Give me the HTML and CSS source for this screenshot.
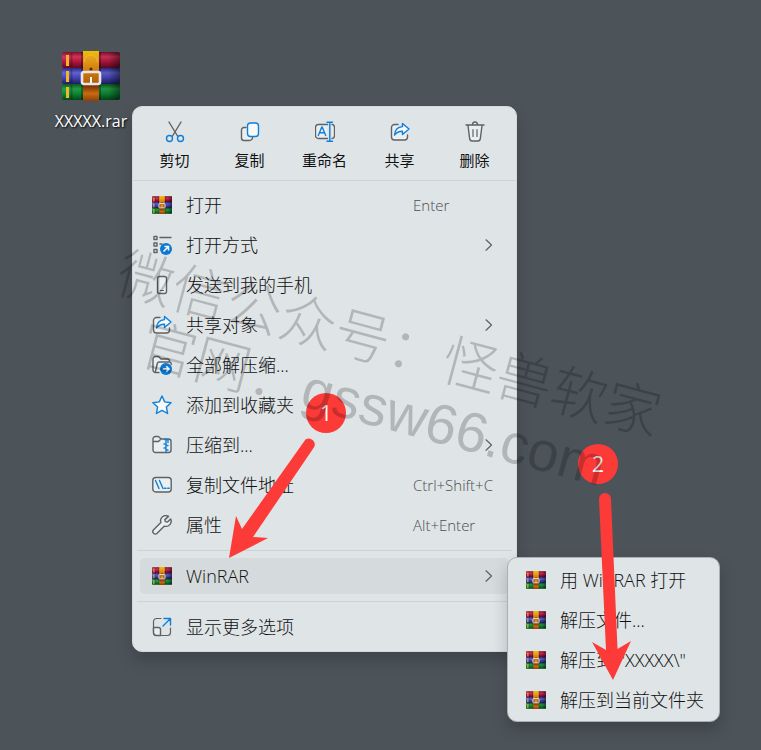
FILE: index.html
```html
<!DOCTYPE html>
<html lang="zh-CN">
<head>
  <meta charset="UTF-8">
  <meta name="viewport" content="width=device-width, initial-scale=1">
  <title>解压到当前文件夹</title>
  <link rel="stylesheet" href="styles.css">
</head>
<body>
<svg class="defs" width="0" height="0" aria-hidden="true">
  <defs>
    <linearGradient id="g-red" x2="0" y2="1"><stop offset="0" stop-color="#7d1230"/><stop offset=".3" stop-color="#d8345c"/><stop offset=".6" stop-color="#b5173f"/><stop offset="1" stop-color="#5e0a24"/></linearGradient>
    <linearGradient id="g-blue" x2="0" y2="1"><stop offset="0" stop-color="#2b2b85"/><stop offset=".3" stop-color="#6464d4"/><stop offset=".6" stop-color="#4646b8"/><stop offset="1" stop-color="#1f1f62"/></linearGradient>
    <linearGradient id="g-green" x2="0" y2="1"><stop offset="0" stop-color="#0a5a22"/><stop offset=".3" stop-color="#22a046"/><stop offset=".6" stop-color="#0d8a35"/><stop offset="1" stop-color="#04491a"/></linearGradient>
    <linearGradient id="g-side"><stop offset="0" stop-color="#000" stop-opacity="0"/><stop offset=".8" stop-color="#000" stop-opacity=".1"/><stop offset="1" stop-color="#000" stop-opacity=".5"/></linearGradient>
    <linearGradient id="g-belt" x2="0" y2="1"><stop offset="0" stop-color="#f0c000"/><stop offset=".15" stop-color="#e3a018"/><stop offset=".4" stop-color="#d07a10"/><stop offset=".62" stop-color="#b86008"/><stop offset=".7" stop-color="#7a3204"/><stop offset=".85" stop-color="#c96a10"/><stop offset="1" stop-color="#8c4006"/></linearGradient>
    <symbol id="rar" viewBox="0 0 58 50" preserveAspectRatio="none">
      <rect x="0" y="1" width="58" height="16" rx="2" fill="url(#g-red)"/>
      <rect x="0" y="17" width="58" height="16" rx="2" fill="url(#g-blue)"/>
      <rect x="0" y="33" width="58" height="16" rx="2" fill="url(#g-green)"/>
      <rect x="0" y="1" width="58" height="48" rx="2" fill="url(#g-side)"/>
      <path d="M5.500 4v11M5.500 20v11M5.500 36v11" stroke="#f3b52a" stroke-width="3"/>
      <path d="M9.500 2v14M9.500 18v14M9.500 34v14" stroke="#000" stroke-opacity=".25" stroke-width="2"/>
      <path d="M19 1h2v48h-2zM37 1h2v48h-2z" fill="#000" fill-opacity=".3"/>
      <rect x="21" y="0" width="16" height="50" fill="url(#g-belt)"/>
      <path d="M22.500 11q0-7 6.500-7t6.500 7" fill="none" stroke="#f0b840"/>
      <circle cx="29" cy="18" r="1.600" fill="#5d2a04"/>
      <rect x="20" y="21" width="18" height="12" rx="2" fill="none" stroke="#e4e6ea" stroke-width="2.600"/>
      <path d="M29 26v6" stroke="#fff" stroke-width="2"/>
    </symbol>
    <symbol id="share" viewBox="0 0 20 20">
      <path class="ln" d="M8 2.500H4.500a3 3 0 0 0-3 3v9.500a3 3 0 0 0 3 3h10a3 3 0 0 0 3-3v-2"/>
      <path class="bl" d="M12.500 1.500l6.500 5.500-6.500 5.500v-3.300c-3.500-.2-5.800 1-8 3.800.3-4.500 3-8 8-8.400z"/>
    </symbol>
    <symbol id="chevron" viewBox="0 0 8 12"><path class="thin" d="M1 .8L6.500 6 1 11.200"/></symbol>
  </defs>
</svg>

<main class="desktop">
  <div class="file">
    <svg class="file-icon"><use href="#rar"/></svg>
    <span>XXXXX.rar</span>
  </div>

  <div class="menu">
    <div class="toolbar">
      <button>
        <svg viewBox="0 0 20 22"><path class="ln" d="M4 1l8.500 14M16 1L7.500 15"/><circle class="ring" cx="4.500" cy="17.500" r="3"/><circle class="ring" cx="15.500" cy="17.500" r="3"/></svg>
        <span>剪切</span>
      </button>
      <button>
        <svg viewBox="0 0 20 22"><path class="ln" d="M6 6.500H4a2.500 2.500 0 0 0-2.500 2.500v8A2.500 2.500 0 0 0 4 19.500h5.500a3 3 0 0 0 3-3"/><rect class="bl" x="7.500" y="2" width="11" height="13.500" rx="3"/></svg>
        <span>复制</span>
      </button>
      <button>
        <svg viewBox="0 0 20 22"><path class="ln" d="M12.500 3.500h-9a3 3 0 0 0-3 3v8a3 3 0 0 0 3 3h9M17 3.500c1.700 0 2.500 1.500 2.500 3v8c0 1.500-.8 3-2.500 3"/><path class="ring" d="M3.300 14.500L6.800 6h.4l3.500 8.500M4.500 11.800h5M12 1.300h5.500M12 20.200h5.500M14.800 1.300v19"/></svg>
        <span>重命名</span>
      </button>
      <button>
        <svg viewBox="0 -1 20 22"><use href="#share" width="20" height="20"/></svg>
        <span>共享</span>
      </button>
      <button>
        <svg viewBox="0 0 20 22"><path class="ln" d="M3 4.500l1.700 13.500a2.500 2.500 0 0 0 2.400 2h5.800a2.500 2.500 0 0 0 2.400-2L17 4.500M1 4h18M7.500 4c0-4 5-4 5 0"/><path class="thin" d="M8 8.500v7M12 8.500v7"/></svg>
        <span>删除</span>
      </button>
    </div>

    <ul class="list">
      <li><button class="item"><svg class="rar"><use href="#rar"/></svg><span>打开</span><kbd>Enter</kbd></button></li>
      <li><button class="item">
        <svg viewBox="0 0 20 20"><path class="ln" d="M2 1.500h3v3H2zM2 8h3v3H2zM2 14.500h3v3H2zM8 2.500h11M8 9h2"/><circle class="dot" cx="14" cy="14" r="6"/><path class="wh" d="M11.500 16.500l5-5M12.500 11.500h4v4"/></svg>
        <span>打开方式</span><svg class="chevron"><use href="#chevron"/></svg></button></li>
      <li><button class="item">
        <svg viewBox="0 0 20 20"><rect class="ln" x="5.500" y="1.500" width="9" height="17" rx="2"/><path class="thin" d="M8.500 15.500h3"/></svg>
        <span>发送到我的手机</span></button></li>
      <li><button class="item">
        <svg viewBox="0 0 20 20"><use href="#share"/></svg>
        <span>共享对象</span><svg class="chevron"><use href="#chevron"/></svg></button></li>
      <li><button class="item">
        <svg viewBox="0 0 20 20"><path class="ln" d="M7 17.500H3.500a2.500 2.500 0 0 1-2.500-2.500V4a2.500 2.500 0 0 1 2.500-2.500H6.500l2.500 2.500h6.500a2 2 0 0 1 2 2M3.300 17l2-8.500a2 2 0 0 1 2-1.500h10.200a2 2 0 0 1 1.700 2.500"/><circle class="dot" cx="14" cy="14" r="6"/><path class="wh" d="M10.800 14h6M14.300 11.300L17 14l-2.700 2.700"/></svg>
        <span>全部解压缩...</span></button></li>
      <li><button class="item">
        <svg viewBox="0 0 20 20"><path class="bl" d="M10 1l2.700 5.900 6.400.8-4.700 4.400 1.200 6.400L10 15.400l-5.600 3.100 1.200-6.400L.9 7.700l6.400-.8z"/></svg>
        <span>添加到收藏夹</span></button></li>
      <li><button class="item">
        <svg viewBox="0 0 20 20"><path class="ln" d="M1 6.500V4a2.500 2.500 0 0 1 2.500-2.500h3L9 4h7.500A2.500 2.500 0 0 1 19 6.500v8.500a2.500 2.500 0 0 1-2.500 2.500h-13A2.500 2.500 0 0 1 1 15zh5.500L9 4"/><path class="ring" d="M12.500 4.500h3.500v3M14 4.500v13M14 10.500h2M12 9h2M12 13h2M14 15h2"/></svg>
        <span>压缩到...</span><svg class="chevron"><use href="#chevron"/></svg></button></li>
      <li><button class="item">
        <svg viewBox="0 0 20 20"><rect class="ln" x=".8" y="2.500" width="18.400" height="14.500" rx="3"/><path class="ring" d="M3.500 5.500l3.500 8M7.500 5.500l3.500 8M12.500 13.200h1.500M15.700 13.200h1.500"/></svg>
        <span>复制文件地址</span><kbd>Ctrl+Shift+C</kbd></button></li>
      <li><button class="item">
        <svg viewBox="0 0 20 20"><path class="ln" d="M16.500 1.400a5.200 5.200 0 0 0-7.600 6.100L1.600 14.800a2.400 2.400 0 0 0 3.500 3.500l7.300-7.200A5.200 5.200 0 0 0 18.700 4l-3.200 3.100-2.200-.5-.5-2z"/></svg>
        <span>属性</span><kbd>Alt+Enter</kbd></button></li>
    </ul>
    <hr>
    <ul class="list">
      <li class="parent">
        <button class="item active"><svg class="rar"><use href="#rar"/></svg><span>WinRAR</span><svg class="chevron"><use href="#chevron"/></svg></button>
        <ul class="list submenu">
          <li><button class="item"><svg class="rar"><use href="#rar"/></svg><span>用 WinRAR 打开</span></button></li>
          <li><button class="item"><svg class="rar"><use href="#rar"/></svg><span>解压文件...</span></button></li>
          <li><button class="item"><svg class="rar"><use href="#rar"/></svg><span>解压到 "XXXXX\"</span></button></li>
          <li><button class="item"><svg class="rar"><use href="#rar"/></svg><span>解压到当前文件夹</span></button></li>
        </ul>
      </li>
    </ul>
    <hr>
    <ul class="list">
      <li><button class="item">
        <svg viewBox="0 0 20 20"><path class="thin" d="M9 1.500H4.500a3 3 0 0 0-3 3v11a3 3 0 0 0 3 3h11a3 3 0 0 0 3-3V11"/><path class="ln" d="M1.500 10.500h5a2 2 0 0 1 2 2v6h-4a3 3 0 0 1-3-3z"/><path class="ring" d="M11 9l7.500-7.500M12 1.500h6.500V8"/></svg>
        <span>显示更多选项</span></button></li>
    </ul>
  </div>

  <!-- step arrows -->
  <svg class="arrow arrow-1" viewBox="0 0 90 122"><path d="M76.500 2.500a6 6 0 0 1 8.700 7.500L24 100l15 1L0 121 7 79l6 13z"/></svg>
  <svg class="arrow arrow-2" viewBox="0 0 40 188"><path d="M7 7a6 6 0 0 1 12 0l6.500 150 13.500-8-18 39L0 150l14 8z"/></svg>
  <span class="step step-1">1</span>
  <span class="step step-2">2</span>

  <div class="watermark"><p>微信公众号：怪兽软家<br>官网：gssw66.com</p></div>
</main>
</body>
</html>
```
FILE: styles.css
```css
*{margin:0;padding:0;box-sizing:border-box;}
body{background:#4c545a;color:#101112;font-family:"Open Sans","Noto Sans CJK SC",sans-serif;font-size:18px;}
ul{list-style:none;}
button{border:0;background:none;font:inherit;color:inherit;}
.defs{position:absolute;}
.desktop{position:relative;min-height:100vh;overflow:hidden;}

.file{position:absolute;left:46px;top:51px;width:90px;display:flex;flex-direction:column;align-items:center;gap:9px;color:#fff;font-size:16px;line-height:22px;text-shadow:1px 1px 2px #000;}
.file-icon{width:58px;height:50px;}

.menu{position:absolute;left:132px;top:106px;width:385px;background:#dfe4e6;border:1px solid #d3d9dc;border-radius:10px;box-shadow:0 8px 16px rgba(0,0,0,0.2);}
.toolbar{display:grid;grid-template-columns:repeat(5,1fr);padding:14px 4px 8px;border-bottom:1px solid #cdd2d4;}
.toolbar button{display:flex;flex-direction:column;align-items:center;gap:6px;font-size:15px;line-height:23px;}
.toolbar svg{width:20px;height:22px;}

.list{display:flex;flex-direction:column;gap:4px;padding:0 7px;}
.toolbar + .list{padding-top:6px;}
.item{display:grid;grid-template-columns:20px 1fr 96px;column-gap:14px;align-items:center;width:100%;height:36px;padding-left:12px;border-radius:5px;text-align:left;font-size:18px;font-weight:300;line-height:24px;white-space:nowrap;}
.item > svg{width:20px;height:20px;}
.item > .rar{height:18px;}
.item > .chevron{width:8px;height:12px;justify-self:end;margin-right:16px;}
.item kbd{font-family:"Open Sans",sans-serif;font-size:15px;color:#4b4e50;}
.item.active{background:#d5dadc;}
hr{border:0;border-top:1px solid #cdd2d4;margin:7px 4px;}
.menu > .list:last-child{padding-bottom:6px;}

.parent{position:relative;}
.submenu{position:absolute;left:100%;top:-1px;width:213px;margin-left:-2px;padding:4px 0 3px;background:#dfe4e6;border:1px solid #a9b0b4;border-radius:10px;box-shadow:0 8px 16px rgba(0,0,0,0.2);}
.submenu .item{grid-template-columns:20px 1fr;padding-left:18px;}

.ln,.thin,.bl,.ring{fill:none;stroke:#5f6264;stroke-width:1.4;stroke-linejoin:round;stroke-linecap:round;}
.ln{fill:#f4f6f7;fill-opacity:.6;}
.thin{stroke-width:1.2;}
.bl{fill:#f7f9fa;stroke:#0f7fd8;}
.ring{stroke:#0f7fd8;}
.dot{fill:#0a78d4;}
.wh{fill:none;stroke:#fff;stroke-width:1.5;}

.arrow{position:absolute;fill:#fc3a38;}
.arrow-1{left:229px;top:437px;width:90px;height:122px;}
.arrow-2{left:592px;top:492px;width:40px;height:188px;}
.step{position:absolute;width:40px;height:40px;border-radius:50%;background:#fc3a38;color:#fff;font-size:21px;line-height:40px;text-align:center;}
.step-1{left:306px;top:393px;}
.step-2{left:578px;top:444px;}

.watermark{position:absolute;top:0;right:0;bottom:0;left:0;display:flex;align-items:center;justify-content:center;pointer-events:none;}
.watermark p{transform:rotate(15deg);font-family:"Liberation Sans","Noto Sans CJK SC",sans-serif;font-size:56px;font-weight:300;line-height:63px;text-align:center;white-space:nowrap;color:rgba(0,0,0,0.2);}
```
